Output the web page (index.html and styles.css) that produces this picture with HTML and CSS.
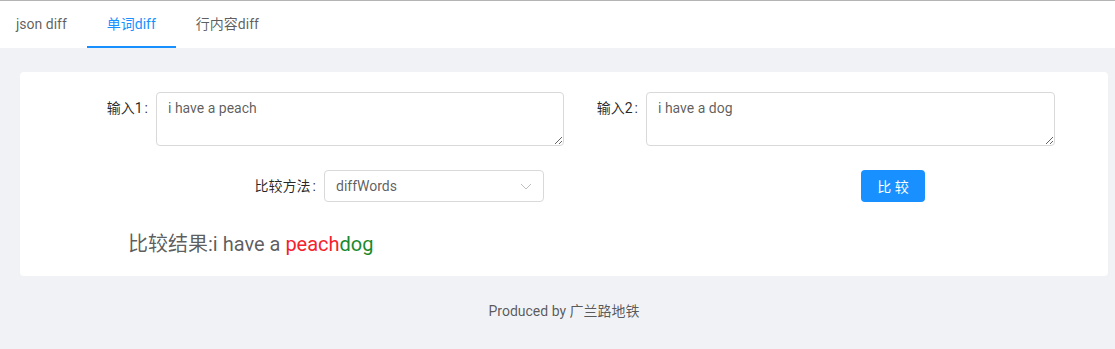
FILE: index.html
```html
<!DOCTYPE html>
<html lang="zh">
<head>
    <meta charset="UTF-8">
    <title>diff</title>
    <link rel="stylesheet" href="styles.css">
</head>
<body>
    <div class="header">
        <div class="tab">json diff</div>
        <div class="tab active">单词diff</div>
        <div class="tab">行内容diff</div>
    </div>

    <div class="main">
        <div class="card">
            <div class="row">
                <div class="field">
                    <label class="lbl-1">输入1</label>
                    <textarea class="box">i have a peach</textarea>
                </div>
                <div class="field">
                    <label class="lbl-2">输入2</label>
                    <textarea class="box box-2">i have a dog</textarea>
                </div>
            </div>
            <div class="row row-2">
                <div class="field">
                    <label class="lbl-3">比较方法</label>
                    <div class="select">
                        <span>diffWords</span>
                        <svg width="12" height="12" viewBox="0 0 12 12"><path d="M1 4 L6 9 L11 4" fill="none" stroke="#bfbfbf" stroke-width="1"/></svg>
                    </div>
                </div>
                <button class="btn">比 较</button>
            </div>
            <div class="result">比较结果:i have a <span class="del">peach</span><span class="add">dog</span></div>
        </div>
        <div class="footer">Produced by 广兰路地铁</div>
    </div>
</body>
</html>
```

FILE: styles.css
```css
body {
    margin: 0;
    font-family: Roboto, "Noto Sans CJK SC", sans-serif;
    font-size: 14px;
    color: rgba(0, 0, 0, 0.65);
    background: #f0f2f5;
    height: 349px;
    overflow: hidden;
}
.header {
    display: flex;
    background: #fff;
    border-top: 1px solid #b4b4b4;
    height: 47px;
}
.tab {
    padding: 1px 20px 0;
    line-height: 44px;
    border-bottom: 2px solid transparent;
}
.tab:first-child {
    padding-left: 16px;
}
.tab.active {
    color: #1890ff;
    border-bottom-color: #1890ff;
}
.main {
    padding: 24px 7px 0 20px;
}
.card {
    background: #fff;
    border-radius: 4px;
    height: 204px;
    box-sizing: border-box;
    padding-top: 20px;
}
.row {
    display: flex;
}
.field {
    display: flex;
    align-items: flex-start;
}
.field label {
    color: rgba(0, 0, 0, 0.85);
    line-height: 32px;
    text-align: right;
    padding-right: 8px;
    box-sizing: border-box;
}
.field label::after {
    content: ":";
    margin-left: 2px;
}
.lbl-1 {
    width: 136px;
}
.lbl-2 {
    width: 82px;
}
.lbl-3 {
    width: 304px;
}
.box {
    font-family: inherit;
    font-size: 14px;
    color: rgba(0, 0, 0, 0.65);
    border: 1px solid #d9d9d9;
    border-radius: 4px;
    padding: 5px 11px 4px;
    margin: 0;
    height: 54px;
    box-sizing: border-box;
    width: 408px;
    line-height: 1.5;
}
.box-2 {
    width: 409px;
}
.row-2 {
    margin-top: 24px;
    align-items: center;
}
.select {
    display: flex;
    align-items: center;
    justify-content: space-between;
    width: 220px;
    height: 32px;
    box-sizing: border-box;
    border: 1px solid #d9d9d9;
    border-radius: 4px;
    padding: 0 11px;
}
.btn {
    margin-left: 317px;
    width: 64px;
    height: 32px;
    background: #1890ff;
    color: #fff;
    border: none;
    border-radius: 4px;
    font-family: inherit;
    font-size: 14px;
}
.result {
    margin: 26px 0 0 108px;
    font-size: 20px;
    color: rgba(0, 0, 0, 0.65);
}
.del {
    color: #f5222d;
}
.add {
    color: #1a8a2e;
}
.footer {
    text-align: center;
    padding-top: 24px;
}
```
